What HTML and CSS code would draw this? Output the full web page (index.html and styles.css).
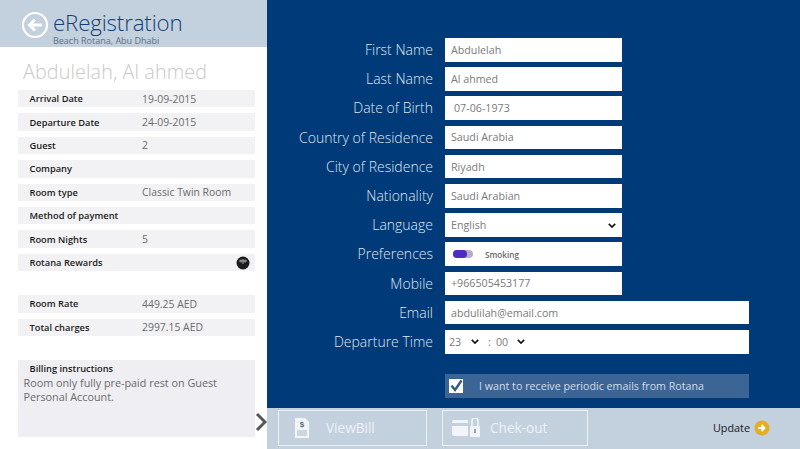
FILE: index.html
```html
<!DOCTYPE html>
<html lang="en">
<head>
<meta charset="utf-8">
<title>eRegistration</title>
<link rel="stylesheet" href="styles.css">
</head>
<body>
<div class="app">
  <aside class="side">
    <header class="head">
      <svg class="back" width="28" height="28" viewBox="0 0 28 28"><circle cx="14" cy="14" r="12" fill="none" stroke="#fff" stroke-width="2.2"/><path d="M21 14H9M14 8.500 8.500 14l5.500 5.500" fill="none" stroke="#fff" stroke-width="3"/></svg>
      <div class="brand">
        <div class="title">eRegistration</div>
        <div class="sub">Beach Rotana, Abu Dhabi</div>
      </div>
    </header>
    <h1 class="guest">Abdulelah, Al ahmed</h1>
    <div class="rows">
      <div class="row"><b>Arrival Date</b><span>19-09-2015</span></div>
      <div class="row"><b>Departure Date</b><span>24-09-2015</span></div>
      <div class="row"><b>Guest</b><span>2</span></div>
      <div class="row"><b>Company</b><span></span></div>
      <div class="row"><b>Room type</b><span>Classic Twin Room</span></div>
      <div class="row"><b>Method of payment</b><span></span></div>
      <div class="row"><b>Room Nights</b><span>5</span></div>
      <div class="row"><b>Rotana Rewards</b><span></span>
        <svg class="plus" width="14" height="14" viewBox="0 0 14 14"><circle cx="7" cy="7" r="6.500" fill="#1c1c1c"/><path d="M3 5h8M7 3v5M5 3.500v3M9 3.500v3" stroke="#aaa" stroke-width="1"/></svg>
      </div>
    </div>
    <div class="rows charges">
      <div class="row"><b>Room Rate</b><span>449.25 AED</span></div>
      <div class="row"><b>Total charges</b><span>2997.15 AED</span></div>
    </div>
    <section class="billing">
      <b>Billing instructions</b>
      <p>Room only fully pre-paid rest on Guest Personal Account.</p>
    </section>
  </aside>
  <main class="main">
    <form class="form">
      <label class="lbl">First Name</label><div class="field">Abdulelah</div>
      <label class="lbl">Last Name</label><div class="field">Al ahmed</div>
      <label class="lbl">Date of Birth</label><div class="field indent">07-06-1973</div>
      <label class="lbl">Country of Residence</label><div class="field">Saudi Arabia</div>
      <label class="lbl">City of Residence</label><div class="field">Riyadh</div>
      <label class="lbl">Nationality</label><div class="field">Saudi Arabian</div>
      <label class="lbl">Language</label>
      <div class="field select">English
        <svg class="chev" width="8" height="5" viewBox="0 0 10 6"><path d="M1 1l4 4 4-4" fill="none" stroke="#111" stroke-width="2"/></svg>
      </div>
      <label class="lbl">Preferences</label>
      <div class="field pref"><span class="toggle"><i></i></span><span class="smoking">Smoking</span></div>
      <label class="lbl">Mobile</label><div class="field">+966505453177</div>
      <label class="lbl">Email</label><div class="field wide">abdulilah@email.com</div>
      <label class="lbl">Departure Time</label>
      <div class="field wide time">
        <span>23</span><svg class="chev" width="8" height="5" viewBox="0 0 10 6"><path d="M1 1l4 4 4-4" fill="none" stroke="#111" stroke-width="2"/></svg>
        <span class="colon">:</span><span>00</span><svg class="chev" width="8" height="5" viewBox="0 0 10 6"><path d="M1 1l4 4 4-4" fill="none" stroke="#111" stroke-width="2"/></svg>
      </div>
      <div class="optin">
        <svg width="14" height="14" viewBox="0 0 14 14"><rect width="14" height="14" fill="#fff"/><path d="M2.500 6.500 6 11 12.500 1.500" fill="none" stroke="#2f5a8c" stroke-width="2.400"/></svg>
        <span>I want to receive periodic emails from Rotana</span>
      </div>
    </form>
    <footer class="foot">
      <div class="btn bill">
        <svg width="14" height="20" viewBox="0 0 14 20"><path d="M0 0h10l4 4v16H0z" fill="#f2f5f8"/><text x="7" y="9" font-size="8" font-weight="700" text-anchor="middle" fill="#5a6a7a" font-family="Liberation Sans">$</text><path d="M2 13h10M2 15h10M2 17h10" stroke="#a9b6c4"/></svg>
        <span>ViewBill</span>
      </div>
      <div class="btn checkout">
        <svg width="28" height="20" viewBox="0 0 28 20"><path d="M0 4a2 2 0 0 1 2-2h14v3H0zM0 8h16v10H2a2 2 0 0 1-2-2z" fill="#f2f5f8"/><rect x="18" y="8" width="10" height="11" rx="1" fill="#f2f5f8"/><path d="M20 8V3a3 3 0 0 1 6 0v5" fill="none" stroke="#f2f5f8" stroke-width="1.500"/><rect x="22" y="11" width="2" height="4" fill="#97a5b5"/></svg>
        <span>Chek-out</span>
      </div>
      <div class="update">
        <span>Update</span>
        <svg width="16" height="16" viewBox="0 0 16 16"><circle cx="8" cy="8" r="7.500" fill="#e3ae21"/><path d="M4 8h6M7.500 5 10.500 8l-3 3" fill="none" stroke="#fff" stroke-width="1.800"/></svg>
      </div>
    </footer>
  </main>
  <svg class="more" width="12" height="20" viewBox="0 0 12 20"><path d="M2 2l8 8-8 8" fill="none" stroke="#555" stroke-width="3"/></svg>
</div>
</body>
</html>
```

FILE: styles.css
```css
* { box-sizing: border-box; }
html, body { margin: 0; padding: 0; }
body { font-family: "Open Sans", "Noto Sans", sans-serif; background: #fff; overflow: hidden; }
.app { position: relative; display: flex; width: 800px; height: 449px; overflow: hidden; }

.side { width: 267px; flex: none; background: #fff; display: flex; flex-direction: column; }
.head { height: 47px; background: #c3d0de; display: flex; align-items: flex-start; padding: 11px 0 0 21px; gap: 4px; }
.back { flex: none; }
.brand { display: flex; flex-direction: column; }
.title { font-size: 22.300px; line-height: 24px; font-weight: 300; color: #0f3f77; letter-spacing: -.15px; }
.sub { font-size: 9px; line-height: 11px; color: #5d6f84; }
.guest { margin: 12px 0 0 23px; font-size: 19.800px; line-height: 26px; font-weight: 300; color: #c9c9c9; letter-spacing: .1px; }
.rows { margin: 5px 12px 0 17.500px; display: flex; flex-direction: column; gap: 6px; }
.row { position: relative; height: 17.400px; background: #f2f2f5; display: flex; align-items: center; font-size: 10.400px; color: #6a6a6a; padding-left: 12px; }
.row b { width: 112.500px; flex: none; font-weight: 600; color: #1a1a1a; font-size: 9.300px; }
.plus { position: absolute; right: 5px; top: 2px; }
.charges { margin-top: 24px; }
.billing { margin: 24px 12px 0 17.500px; height: 77px; background: #eeeef3; font-size: 10.800px; color: #6a6a6a; }
.billing b { display: block; padding: 2px 0 0 12px; font-weight: 600; color: #1a1a1a; font-size: 9.300px; line-height: 13px; }
.billing p { margin: 1px 0 0 6px; line-height: 14px; width: 215px; }

.main { flex: 1; background: #003a78; display: flex; flex-direction: column; }
.form { flex: 1; padding: 38px 0 0; display: grid; grid-template-columns: 166px 177px 115px; grid-auto-rows: 23.700px; column-gap: 12px; row-gap: 5.500px; align-content: start; }
.lbl { grid-column: 1; color: #dfe8f2; font-size: 14px; font-weight: 300; text-align: right; line-height: 23px; white-space: nowrap; }
.field { grid-column: 2; background: #fff; color: #7a7a7a; font-size: 10.700px; display: flex; align-items: center; padding-left: 6px; }
.indent { padding-left: 9px; }
.wide { grid-column: 2 / 4; }
.select { justify-content: space-between; padding: 1px 6px 0 6px; }
.chev { flex: none; }
.pref { padding-left: 8px; }
.toggle { width: 20px; height: 8px; border-radius: 4px; background: #b5aec2; display: block; }
.toggle i { display: block; width: 14px; height: 8px; border-radius: 4px; background: #4f2cc0; }
.smoking { margin-left: 12px; font-size: 8.200px; font-weight: 600; color: #666; }
.time { padding-left: 4px; }
.time span { width: 22px; }
.time .chev { margin-right: 9px; }
.time .colon { width: 8px; }
.time span:nth-of-type(3) { width: 21px; }
.optin { grid-column: 2 / 4; margin-top: 15px; height: 24px; background: #3c6595; color: #cfdcea; font-size: 10.700px; display: flex; align-items: center; padding-left: 4px; gap: 16px; }
.foot { height: 41px; background: #c3d0de; display: flex; align-items: center; padding: 0 0 2px 11px; position: relative; }
.btn { height: 36px; border: 1.500px solid #eef2f6; display: flex; align-items: center; color: #eef2f6; font-size: 13.600px; }
.bill { width: 149px; padding-left: 16px; gap: 17px; }
.checkout { width: 146px; margin-left: 15px; padding-left: 9px; gap: 10px; }
.update { margin-left: auto; margin-right: 30px; display: flex; align-items: center; gap: 4px; font-size: 10.800px; color: #1a1a1a; }
.more { position: absolute; left: 255px; top: 412px; }
```
